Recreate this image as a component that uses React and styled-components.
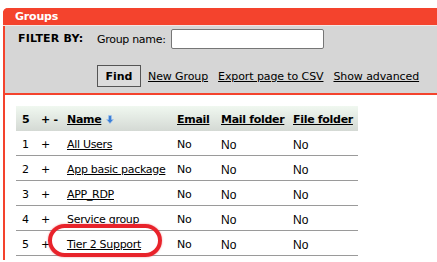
import React from "react";
import styled, { createGlobalStyle } from "styled-components";

const GlobalStyle = createGlobalStyle`
  body {
    margin: 0;
    background: #fff;
    font-family: "DejaVu Sans", Verdana, sans-serif;
    font-size: 11px;
    letter-spacing: -0.3px;
    color: #000;
  }
`;

const rows = [
  { id: 1, name: "All Users" },
  { id: 2, name: "App basic package" },
  { id: 3, name: "APP_RDP" },
  { id: 4, name: "Service group" },
  { id: 5, name: "Tier 2 Support" },
];

const colWidths = [19, 26, 110, 44, 72, 71];

const SortArrow = () => (
  <svg width="8" height="9" viewBox="0 0 8 9" style={{ marginLeft: 5, verticalAlign: "-1px" }}>
    <path d="M2.5 0.5h3v4h2l-3.5 4-3.5-4h2z" fill="#3b7fd6" stroke="#a9c8ee" strokeWidth="0.6" />
  </svg>
);

const App = () => {
  return (
    <Page>
      <GlobalStyle />
      <Panel>
        <TitleBar>Groups</TitleBar>
        <Filter>
          <FilterLabel>FILTER BY:</FilterLabel>
          <Field>
            Group name:
            <Input type="text" />
          </Field>
          <span />
          <Actions>
            <Button>Find</Button>
            <ActionLink>New Group</ActionLink>
            <ActionLink>Export page to CSV</ActionLink>
            <ActionLink>Show advanced</ActionLink>
          </Actions>
        </Filter>
        <Content>
          <Table>
            <colgroup>
              {colWidths.map((w, i) => (
                <col key={i} style={{ width: w }} />
              ))}
            </colgroup>
            <thead>
              <tr>
                <Th>5</Th>
                <Th>+ -</Th>
                <Th>
                  <U>Name</U>
                  <SortArrow />
                </Th>
                <Th><U>Email</U></Th>
                <Th><U>Mail folder</U></Th>
                <Th><U>File folder</U></Th>
              </tr>
            </thead>
            <tbody>
              {rows.map((r) => (
                <tr key={r.id}>
                  <Td>{r.id}</Td>
                  <Td>+</Td>
                  <Td><Link>{r.name}</Link></Td>
                  <Td>No</Td>
                  <Td $plain>No</Td>
                  <Td $plain>No</Td>
                </tr>
              ))}
            </tbody>
          </Table>
          <Marker />
        </Content>
      </Panel>
    </Page>
  );
};

const Page = styled.div`
  padding: 8px 0 0 3px;
`;

const Panel = styled.div`
  border-left: 2px solid #f4432d;
  border-top-left-radius: 5px;
`;

const TitleBar = styled.div`
  background: #f4432d;
  color: #fff;
  font-weight: bold;
  letter-spacing: -0.2px;
  height: 17px;
  line-height: 18px;
  margin-left: -2px;
  padding-left: 12px;
  border-top-left-radius: 5px;
  border-bottom: 1px solid #f3e6e4;
`;

const Filter = styled.div`
  background: #d6d6d6;
  border-bottom: 2px solid #f4432d;
  height: 69px;
  box-sizing: border-box;
  display: grid;
  grid-template-columns: 79px auto;
  grid-template-rows: 30px auto;
  padding: 3px 0 0 13px;
`;

const FilterLabel = styled.div`
  font-weight: bold;
  letter-spacing: 0.2px;
  padding-top: 3px;
`;

const Field = styled.label`
  display: flex;
  align-items: center;
  gap: 5px;
  height: 20px;
`;

const Input = styled.input`
  width: 153px;
  height: 20px;
  box-sizing: border-box;
  border: 1px solid #767676;
  border-radius: 2px;
  background: #fff;
  margin: 0;
`;

const Actions = styled.div`
  display: flex;
  align-items: center;
  gap: 10px;
`;

const Button = styled.button`
  font-family: "DejaVu Sans", Verdana, sans-serif;
  font-size: 11px;
  font-weight: bold;
  width: 44px;
  height: 22px;
  padding: 0;
  margin-right: -3px;
  border: 1px solid #555;
  background: #dcdcdc;
  color: #000;
`;

const Link = styled.a`
  color: #000;
  text-decoration: underline;
  cursor: pointer;
`;

const ActionLink = styled(Link)`
  letter-spacing: -0.1px;
`;

const U = styled.span`
  text-decoration: underline;
`;

const Content = styled.div`
  position: relative;
  padding: 11px 0 0 11px;
  height: 154px;
`;

const Table = styled.table`
  border-collapse: collapse;
  table-layout: fixed;
  width: 342px;
`;

const Th = styled.th`
  text-align: left;
  font-weight: bold;
  height: 24px;
  padding: 1px 0 0 6px;
  white-space: nowrap;
  overflow: visible;
  background: linear-gradient(#f0f8f0, #d4d9d4);
`;

const Td = styled.td`
  height: 21px;
  padding: 3px 0 0 6px;
  white-space: nowrap;
  overflow: visible;
  border-bottom: 1px solid #9a9a9a;
  font-family: ${(p) => (p.$plain ? '"Liberation Sans", Arial, sans-serif' : "inherit")};
  font-size: ${(p) => (p.$plain ? "12px" : "11px")};
  letter-spacing: ${(p) => (p.$plain ? "0" : "-0.3px")};
`;

const Marker = styled.div`
  position: absolute;
  left: 43px;
  top: 129px;
  width: 114px;
  height: 33px;
  box-sizing: border-box;
  border: 4px solid #e8232b;
  border-radius: 17px;
  box-shadow: 0 0 2px rgba(232, 35, 43, 0.5);
`;

export default App;
